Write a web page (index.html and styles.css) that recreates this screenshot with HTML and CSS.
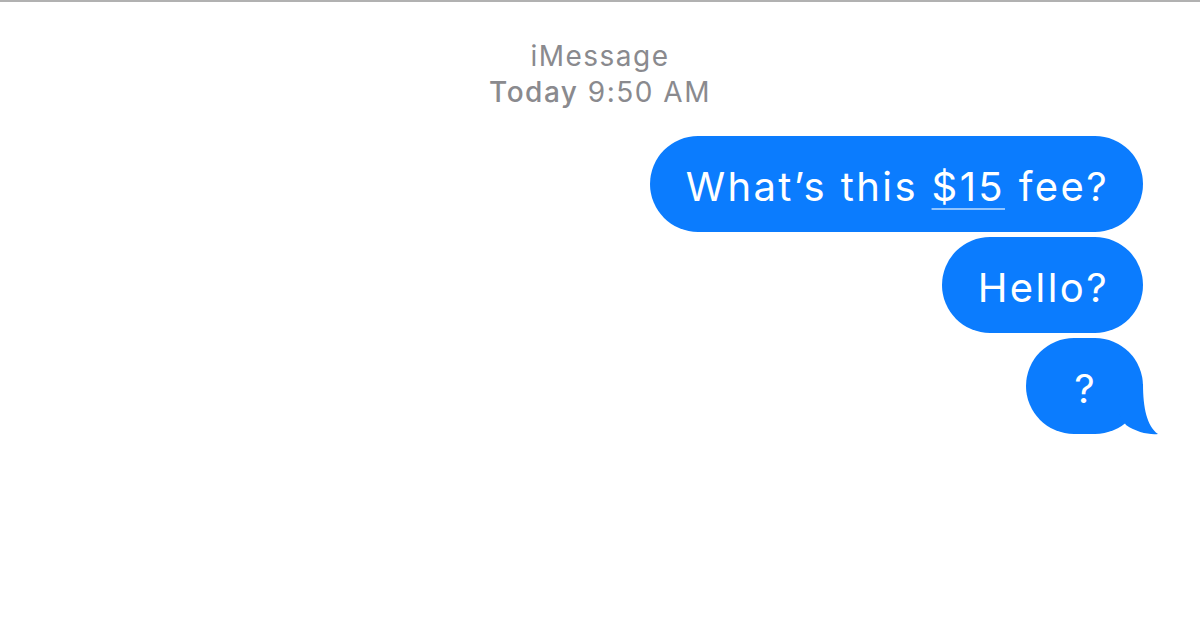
FILE: index.html
```html
<!DOCTYPE html>
<html>
<head>
<meta charset="utf-8">
<link rel="stylesheet" href="styles.css">
</head>
<body>
<div class="screen">
  <header class="meta">
    <div class="service">iMessage</div>
    <div class="stamp"><span class="day">Today</span> 9:50 AM</div>
  </header>
  <section class="thread">
    <div class="bubble">What’s this <span class="link">$15</span> fee?</div>
    <div class="bubble">Hello?</div>
    <div class="bubble last">?
      <svg class="tail" width="40" height="51" viewBox="0 0 40 51"><path d="M0 0 L24 0 C24 24 28 42 39 50 C30 51 17 48 7 41 L0 30 Z" fill="#0b7cfe"/></svg>
    </div>
  </section>
</div>
</body>
</html>
```
FILE: styles.css
```css
html, body {
  margin: 0;
  padding: 0;
  background: #ffffff;
}
.screen {
  width: 1200px;
  height: 625px;
  border-top: 2px solid #b1b1b1;
  box-sizing: border-box;
  font-family: Inter, "Noto Sans", sans-serif;
  overflow: hidden;
}
.meta {
  text-align: center;
  color: #8a8a8e;
  font-size: 28px;
  letter-spacing: 1.5px;
  line-height: 36px;
  padding-top: 36px;
}
.day {
  font-weight: 500;
}
.thread {
  display: flex;
  flex-direction: column;
  align-items: flex-end;
  gap: 5px;
  padding-right: 57px;
  margin-top: 26px;
}
.bubble {
  position: relative;
  background: #0b7cfe;
  color: #ffffff;
  font-size: 40px;
  letter-spacing: 2.4px;
  line-height: 90px;
  height: 96px;
  box-sizing: border-box;
  padding: 6px 34px 0 36px;
  border-radius: 48px;
  white-space: nowrap;
}
.link {
  text-decoration: underline;
  text-decoration-color: rgba(255,255,255,0.55);
  text-decoration-thickness: 2px;
  text-underline-offset: 7px;
}
.last {
  padding: 6px 46px 0 48px;
}
.tail {
  position: absolute;
  right: -16px;
  bottom: -1px;
}
```
